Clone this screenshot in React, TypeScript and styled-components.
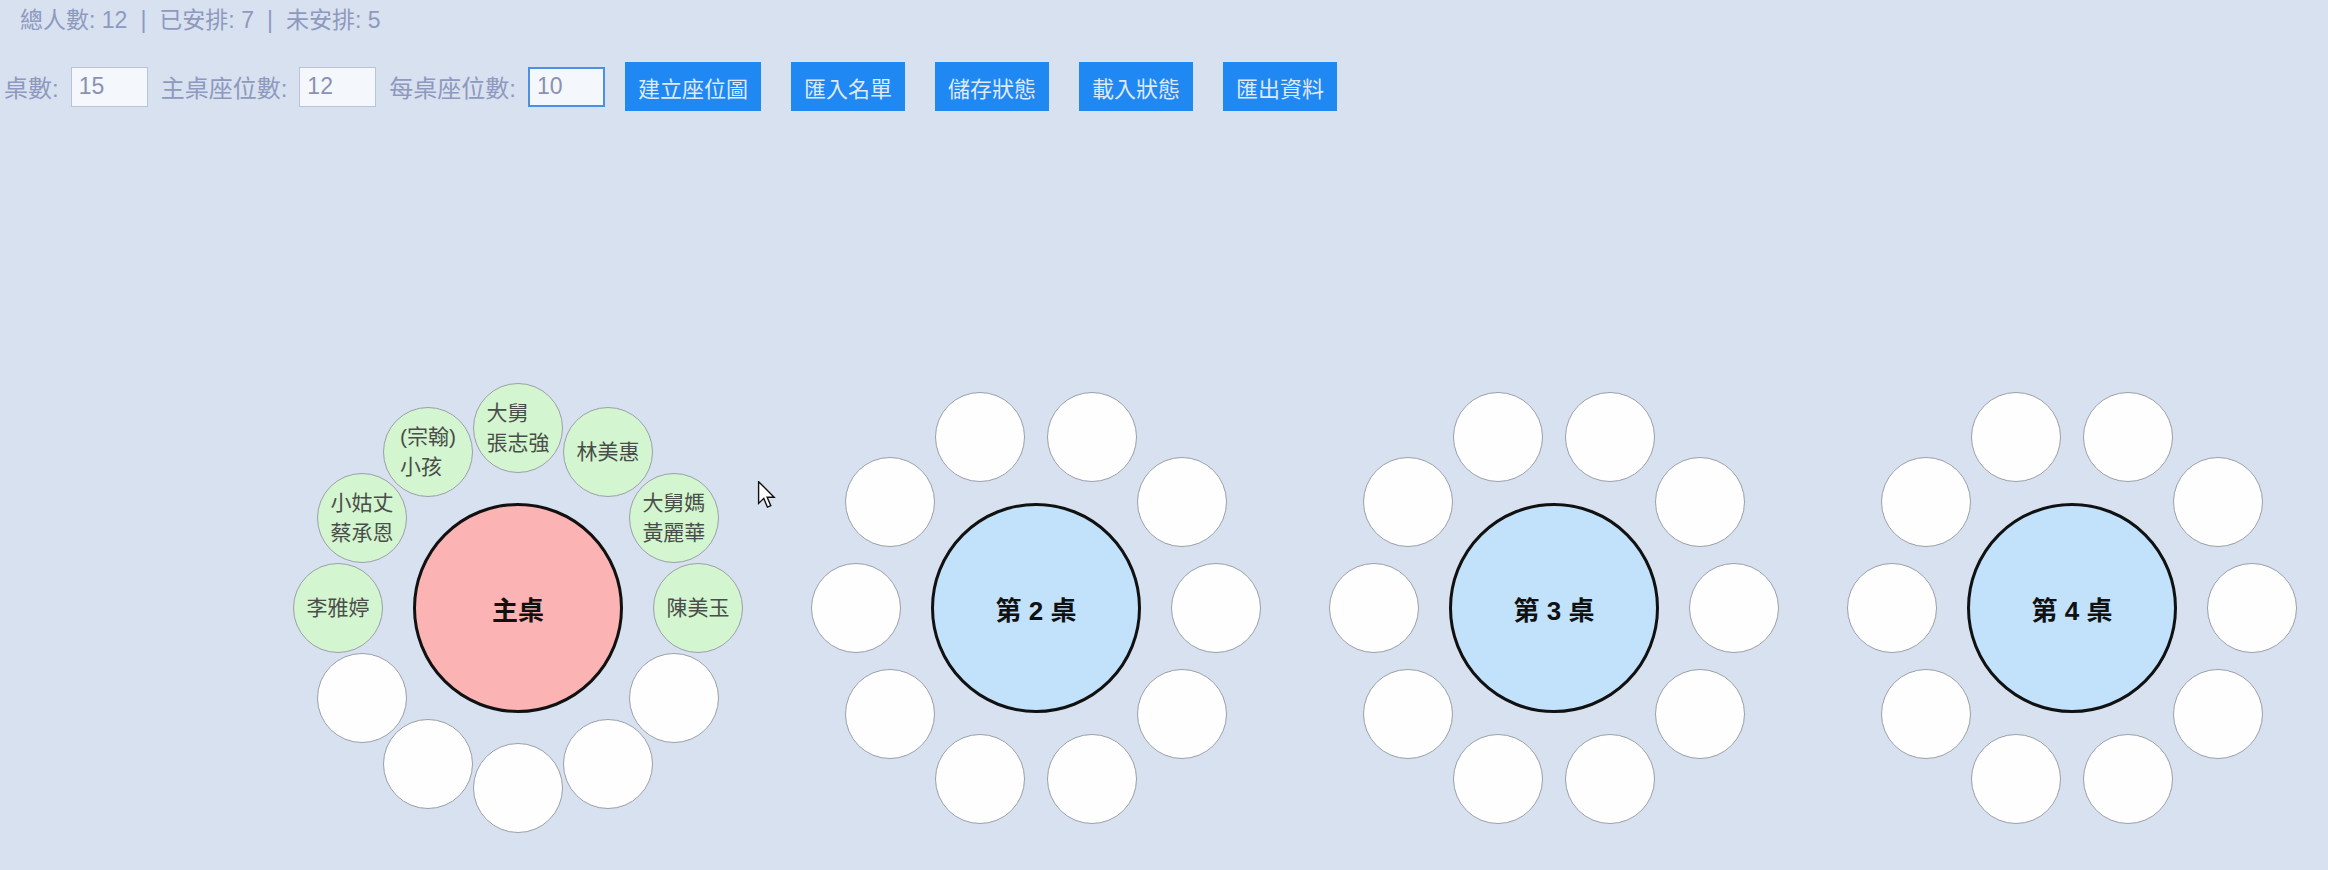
import React from 'react';
import styled, { createGlobalStyle } from 'styled-components';

const GlobalStyle = createGlobalStyle`
  html, body {
    margin: 0;
    padding: 0;
    overflow: hidden;
  }
  body {
    background: #d8e1ef;
    font-family: "Liberation Sans", "Noto Sans CJK TC", sans-serif;
  }
`;

type Guest = string[] | null;

const mainGuests: Guest[] = [
  ['陳美玉'],
  ['大舅媽', '黃麗華'],
  ['林美惠'],
  ['大舅', '張志強'],
  ['(宗翰)', '小孩'],
  ['小姑丈', '蔡承恩'],
  ['李雅婷'],
];

// only the first row of tables fits in the window
const VISIBLE_TABLES = 4;
const MAIN_SEATS = 12;
const SEATS_PER_TABLE = 10;
const SEAT_RADIUS = 180;
const BLOCK = 450;
const SEAT_SIZE = 90;

const Page = styled.div`
  position: relative;
  width: 2328px;
  height: 870px;
  overflow: hidden;
  background: #d8e1ef;
`;

const Stats = styled.div`
  padding: 5px 0 0 20px;
  height: 31px;
  line-height: 31px;
  font-size: 23px;
  color: #8e99bf;
  white-space: nowrap;
`;

const Sep = styled.span`
  margin: 0 13px;
`;

const Toolbar = styled.div`
  display: flex;
  align-items: center;
  height: 49px;
  margin-top: 26px;
  padding-left: 4px;
`;

const Label = styled.label`
  font-size: 24px;
  color: #8e99bf;
  margin-right: 12px;
  white-space: nowrap;
`;

const NumInput = styled.input<{ $focused?: boolean }>`
  box-sizing: border-box;
  width: 77px;
  height: 40px;
  margin-right: 13px;
  padding: 0 7px;
  font: 23px "Liberation Sans", sans-serif;
  color: #8a90b6;
  background: #f4f7fc;
  border: ${p => (p.$focused ? '2px solid #4b8fe6' : '1px solid #b9c4da')};
  outline: none;
`;

const ButtonGroup = styled.div`
  display: flex;
  gap: 30px;
  margin-left: 7px;
`;

const ActionButton = styled.button`
  height: 49px;
  padding: 0 13px;
  border: none;
  background: #1f88f2;
  color: #dfe9f7;
  font-size: 22px;
  font-family: "Liberation Sans", "Noto Sans CJK TC", sans-serif;
  cursor: pointer;
`;

const Floor = styled.div`
  display: flex;
  flex-wrap: wrap;
  gap: 68px;
  margin-top: 272px;
  padding-left: 293px;
`;

const TableBlock = styled.div`
  position: relative;
  width: ${BLOCK}px;
  height: ${BLOCK}px;
  display: flex;
  align-items: center;
  justify-content: center;
`;

const TableTop = styled.div<{ $main?: boolean }>`
  box-sizing: border-box;
  width: 210px;
  height: 210px;
  border-radius: 50%;
  border: 3px solid #111;
  background: ${p => (p.$main ? '#fbb3b3' : '#c2e2fc')};
  display: flex;
  align-items: center;
  justify-content: center;
  font-size: 26px;
  font-weight: bold;
  color: #111;
  white-space: pre;
`;

const Seat = styled.div<{ $taken?: boolean }>`
  position: absolute;
  box-sizing: border-box;
  width: ${SEAT_SIZE}px;
  height: ${SEAT_SIZE}px;
  border-radius: 50%;
  border: 1.5px solid #9ba0a8;
  background: ${p => (p.$taken ? '#d3f5cf' : '#fefefe')};
  display: flex;
  align-items: center;
  justify-content: center;
`;

const SeatName = styled.span`
  font-size: 21px;
  line-height: 30px;
  color: #4a4d4a;
  text-align: left;
  white-space: nowrap;
`;

const Cursor = styled.svg`
  position: absolute;
  left: 757px;
  top: 481px;
  width: 20px;
  height: 28px;
`;

const seatPos = (i: number, n: number) => {
  const a = (i * 2 * Math.PI) / n;
  const c = BLOCK / 2;
  return {
    left: c + SEAT_RADIUS * Math.cos(a) - SEAT_SIZE / 2,
    top: c - SEAT_RADIUS * Math.sin(a) - SEAT_SIZE / 2,
  };
};

const DiningTable = ({ index }: { index: number }) => {
  const main = index === 0;
  const n = main ? MAIN_SEATS : SEATS_PER_TABLE;
  return (
    <TableBlock>
      <TableTop $main={main}>{main ? '主桌' : `第 ${index + 1} 桌`}</TableTop>
      {Array.from({ length: n }, (_, i) => {
        const guest = main ? mainGuests[i] ?? null : null;
        return (
          <Seat key={i} $taken={!!guest} style={seatPos(i, n)}>
            {guest && (
              <SeatName>
                {guest.map((line, k) => (
                  <React.Fragment key={k}>
                    {k > 0 && <br />}
                    {line}
                  </React.Fragment>
                ))}
              </SeatName>
            )}
          </Seat>
        );
      })}
    </TableBlock>
  );
};

const App = () => {
  return (
    <Page>
      <GlobalStyle />
      <Stats>
        總人數: 12<Sep>|</Sep>已安排: 7<Sep>|</Sep>未安排: 5
      </Stats>
      <Toolbar>
        <Label>桌數:</Label>
        <NumInput defaultValue="15" />
        <Label>主桌座位數:</Label>
        <NumInput defaultValue="12" />
        <Label>每桌座位數:</Label>
        <NumInput defaultValue="10" $focused />
        <ButtonGroup>
          <ActionButton>建立座位圖</ActionButton>
          <ActionButton>匯入名單</ActionButton>
          <ActionButton>儲存狀態</ActionButton>
          <ActionButton>載入狀態</ActionButton>
          <ActionButton>匯出資料</ActionButton>
        </ButtonGroup>
      </Toolbar>
      <Floor>
        {Array.from({ length: VISIBLE_TABLES }, (_, i) => (
          <DiningTable key={i} index={i} />
        ))}
      </Floor>
      <Cursor viewBox="0 0 13 20">
        <path d="M0.5 0.5 L0.5 16 L4.2 12.4 L6.8 18.6 L9.2 17.6 L6.6 11.6 L11.6 11.6 Z" fill="#fff" stroke="#111" strokeWidth="1" />
      </Cursor>
    </Page>
  );
};

export default App;
